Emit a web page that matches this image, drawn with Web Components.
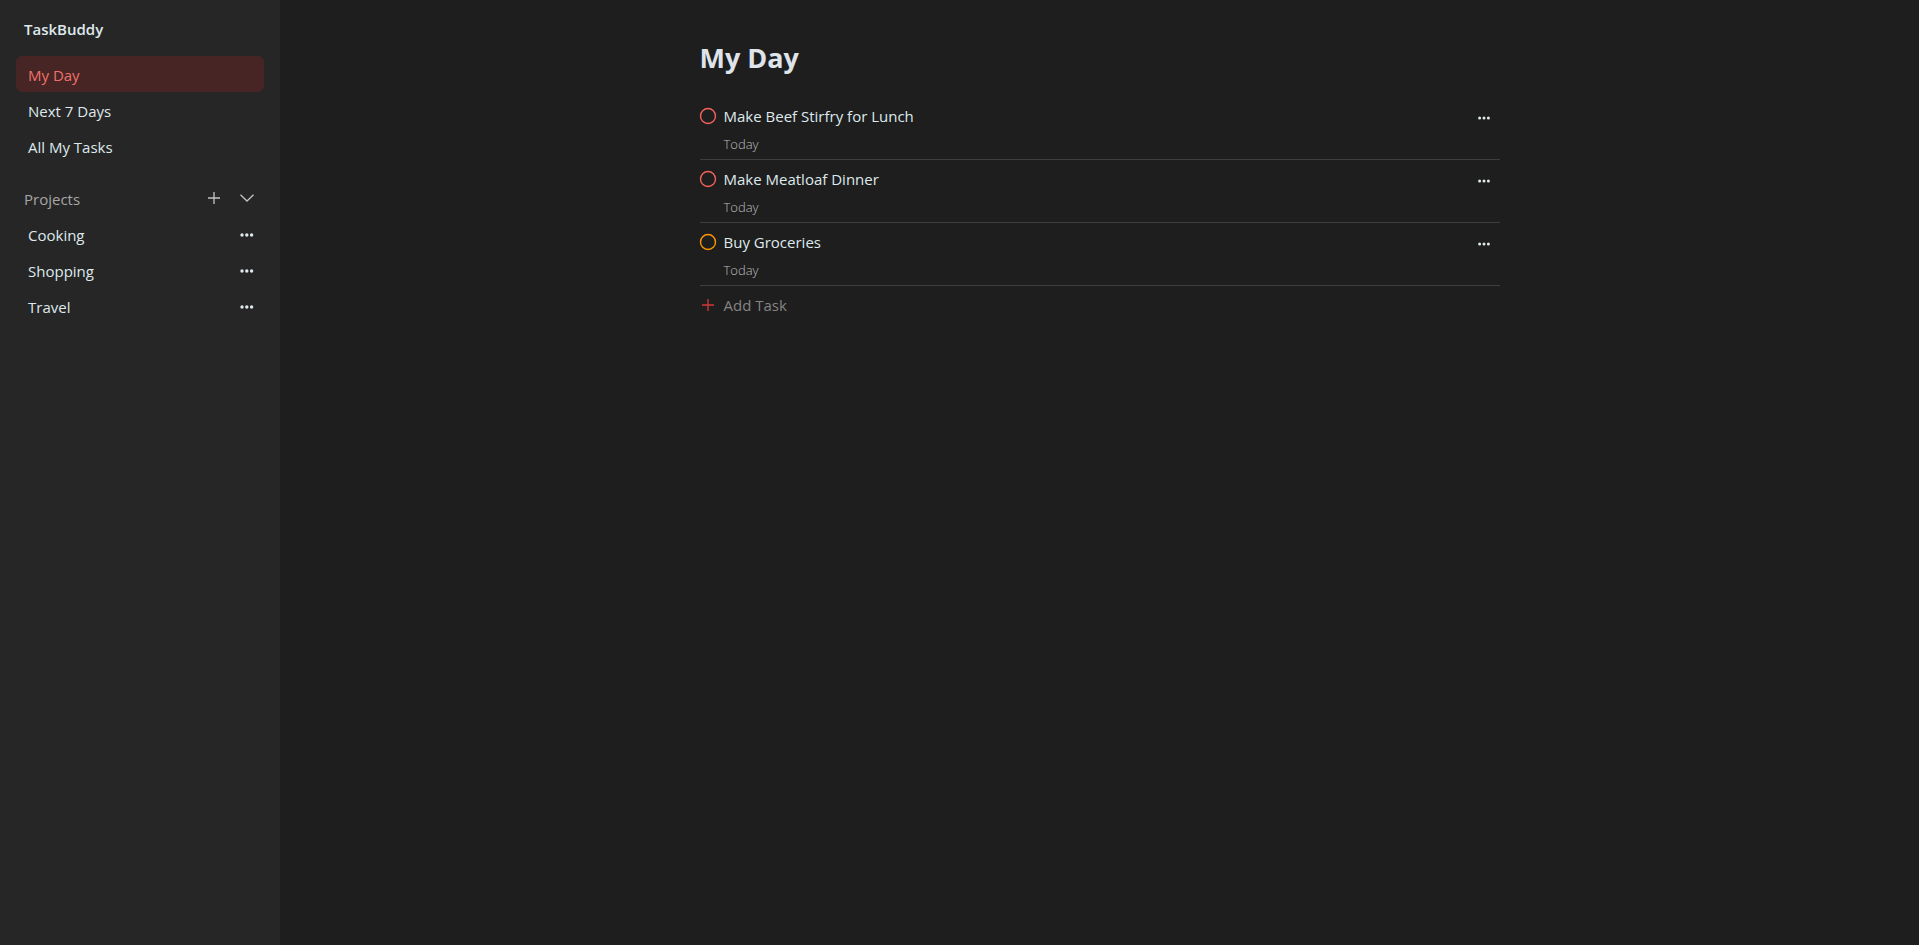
<!DOCTYPE html>
<html lang="en">
<head>
<meta charset="utf-8">
<title>TaskBuddy</title>
<style>
  html, body { margin: 0; height: 100%; }
  body { background: #1e1e1e; color: #dfe9ec; font: 15px/24px "Open Sans", "Segoe UI", sans-serif; }
</style>
</head>
<body>
<task-app>
  <app-sidebar slot="sidebar">
    <nav-item slot="views" active>My Day</nav-item>
    <nav-item slot="views">Next 7 Days</nav-item>
    <nav-item slot="views">All My Tasks</nav-item>
    <nav-item slot="projects" menu>Cooking</nav-item>
    <nav-item slot="projects" menu>Shopping</nav-item>
    <nav-item slot="projects" menu>Travel</nav-item>
  </app-sidebar>
  <task-list heading="My Day">
    <task-item due="Today" priority="high">Make Beef Stirfry for Lunch</task-item>
    <task-item due="Today" priority="high">Make Meatloaf Dinner</task-item>
    <task-item due="Today" priority="medium">Buy Groceries</task-item>
  </task-list>
</task-app>

<script>
const reset = `
  *, :host { box-sizing: border-box; }
  button { background: none; border: 0; padding: 0; margin: 0; font: inherit; color: inherit; cursor: pointer; }
  svg { display: block; overflow: visible; }
`;
const define = (name, render) => customElements.define(name, class extends HTMLElement {
  constructor() {
    super();
    this.attachShadow({ mode: 'open' }).innerHTML = `<style>${reset}</style>${render(this)}`;
  }
});

define('dots-icon', el => `
  <style>:host { display: block; }</style>
  <svg width="16" height="16" viewBox="0 0 16 16" fill="currentColor" aria-hidden="true">
    ${el.hasAttribute('small')
      ? '<circle cx="3.6" cy="8" r="1.5"/><circle cx="8" cy="8" r="1.5"/><circle cx="12.4" cy="8" r="1.5"/>'
      : '<circle cx="3" cy="8" r="1.7"/><circle cx="7.8" cy="8" r="1.7"/><circle cx="12.6" cy="8" r="1.7"/>'}
  </svg>`);

define('plus-icon', () => `
  <style>:host { display: block; }</style>
  <svg width="16" height="16" viewBox="0 0 16 16" fill="none" stroke="currentColor" stroke-width="1.3" aria-hidden="true">
    <path d="M8 2v12M2 8h12"/>
  </svg>`);

define('chevron-icon', () => `
  <style>:host { display: block; }</style>
  <svg width="16" height="16" viewBox="0 0 16 16" fill="none" stroke="currentColor" stroke-width="1.3" aria-hidden="true">
    <path d="M1.5 4.7 8 11l6.5-6.3"/>
  </svg>`);

define('nav-item', el => `
  <style>
    :host { display: flex; align-items: center; height: 36px; padding: 0 9px 0 12px; border-radius: 6px; }
    :host([active]) { background: #472525; color: #f0716a; }
    a { flex: 1; color: inherit; text-decoration: none; padding-top: 2px; }
    button { padding-top: 1px; }
  </style>
  <a href="#"><slot></slot></a>
  ${el.hasAttribute('menu') ? '<button aria-label="Project options"><dots-icon></dots-icon></button>' : ''}`);

define('app-sidebar', () => `
  <style>
    :host { display: block; height: 100%; padding: 16px; background: #262626; }
    .brand { margin: 0 8px; font-size: 15px; line-height: 24px; font-weight: 600; padding-top: 1px; }
    nav { margin-top: 15px; }
    section { margin-top: 16px; }
    header { display: flex; align-items: center; gap: 17px; height: 36px; padding: 0 9px 0 8px; color: #c4c4c4; }
    h2 { flex: 1; margin: 0; padding-top: 2px; font: inherit; color: #a6a6a6; }
  </style>
  <h1 class="brand">TaskBuddy</h1>
  <nav><slot name="views"></slot></nav>
  <section>
    <header>
      <h2>Projects</h2>
      <button aria-label="Add project"><plus-icon></plus-icon></button>
      <button aria-label="Collapse projects"><chevron-icon></chevron-icon></button>
    </header>
    <slot name="projects"></slot>
  </section>`);

define('task-item', el => `
  <style>
    :host { display: grid; grid-template: 28px 28px / 16px 1fr 16px; column-gap: 8px; align-items: center;
      padding: 5px 8px 1px 0; border-bottom: 1px solid #3e3e3e; --ring: #f5625b; }
    :host([priority="medium"]) { --ring: #ff9800; }
    input, .ring { grid-area: 1 / 1; width: 16px; height: 16px; margin: 0; }
    input { opacity: 0; }
    .ring { fill: none; stroke: var(--ring); stroke-width: 1.4; pointer-events: none; }
    input:checked + .ring { fill: var(--ring); }
    .due { grid-area: 2 / 2; font-size: 13px; font-weight: 300; color: #bcbcbc; }
    button { padding-top: 4px; }
  </style>
  <input type="checkbox" id="done">
  <svg class="ring" viewBox="0 0 16 16" aria-hidden="true"><circle cx="8" cy="8" r="7.5"/></svg>
  <label for="done"><slot></slot></label>
  <button aria-label="Task options"><dots-icon small></dots-icon></button>
  <span class="due">${el.getAttribute('due')}</span>`);

define('task-list', el => `
  <style>
    :host { display: block; width: 100%; max-width: 800px; }
    h1 { margin: 0 0 19px; font-size: 27px; line-height: 40px; font-weight: 700; color: #dfe4ea; }
    .add { display: flex; align-items: center; gap: 8px; height: 37px; color: #848484; }
    plus-icon { color: #d0393a; }
  </style>
  <h1>${el.getAttribute('heading')}</h1>
  <slot></slot>
  <button class="add"><plus-icon></plus-icon>Add Task</button>`);

define('task-app', () => `
  <style>
    :host { display: grid; grid-template-columns: 280px 1fr; min-height: 100%; }
    main { display: flex; justify-content: center; align-items: flex-start; padding: 38px 32px; }
  </style>
  <slot name="sidebar"></slot>
  <main><slot></slot></main>`);
</script>
</body>
</html>
